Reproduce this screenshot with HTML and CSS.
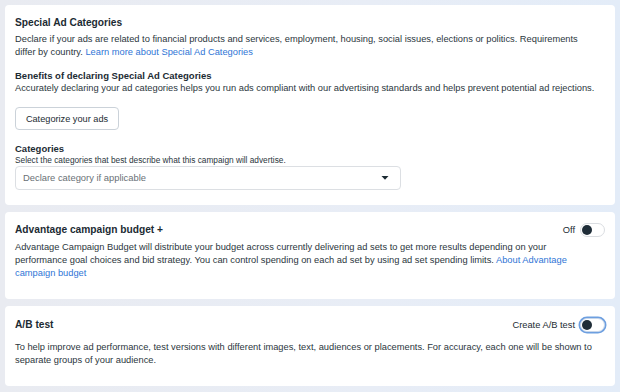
FILE: index.html
```html
<!DOCTYPE html>
<html>
<head>
<meta charset="utf-8">
<link rel="stylesheet" href="styles.css">
</head>
<body>
<main class="page">
  <section class="card card-sac">
    <h2 class="title">Special Ad Categories</h2>
    <p class="text intro">Declare if your ads are related to financial products and services, employment, housing, social issues, elections or politics. Requirements<br>differ by country. <a class="link" href="#">Learn more about Special Ad Categories</a></p>
    <h3 class="subtitle">Benefits of declaring Special Ad Categories</h3>
    <p class="text">Accurately declaring your ad categories helps you run ads compliant with our advertising standards and helps prevent potential ad rejections.</p>
    <button class="btn">Categorize your ads</button>
    <h3 class="subtitle cat-title">Categories</h3>
    <p class="hint">Select the categories that best describe what this campaign will advertise.</p>
    <div class="select">
      <span class="placeholder">Declare category if applicable</span>
      <svg class="caret" width="10" height="6" viewBox="0 0 10 6"><path d="M1.5 1h7L5 4.8z" fill="#1c2b33"/></svg>
    </div>
  </section>

  <section class="card card-acb">
    <div class="head">
      <h2 class="title">Advantage campaign budget <span class="plus">+</span></h2>
      <div class="switch-wrap"><span class="switch-label">Off</span><span class="switch"><span class="knob"></span></span></div>
    </div>
    <p class="text">Advantage Campaign Budget will distribute your budget across currently delivering ad sets to get more results depending on your<br>performance goal choices and bid strategy. You can control spending on each ad set by using ad set spending limits. <a class="link" href="#">About Advantage<br>campaign budget</a></p>
  </section>

  <section class="card card-ab">
    <div class="head">
      <h2 class="title">A/B test</h2>
      <div class="switch-wrap"><span class="switch-label">Create A/B test</span><span class="switch focused"><span class="knob"></span></span></div>
    </div>
    <p class="text">To help improve ad performance, test versions with different images, text, audiences or placements. For accuracy, each one will be shown to<br>separate groups of your audience.</p>
  </section>
</main>
</body>
</html>
```

FILE: styles.css
```css
* { box-sizing: border-box; }
html, body { margin: 0; padding: 0; }
body {
  width: 620px;
  height: 392px;
  overflow: hidden;
  background: linear-gradient(90deg, #e9ebf1 0%, #e8edf6 60%, #e3ecf8 100%);
  font-family: "Liberation Sans", Arial, sans-serif;
  color: #1c2b33;
}
.page {
  padding: 5px 5px 0 5px;
  display: flex;
  flex-direction: column;
  gap: 7px;
}
.card {
  background: #fff;
  border-radius: 4px;
  padding: 0 8px 0 10px;
}
.card-sac { height: 200px; padding-top: 10px; }
.card-acb { height: 87px; padding-top: 10px; }
.card-ab { height: 80px; padding-top: 11px; }

.title {
  margin: 0;
  font-size: 10.2px;
  line-height: 16px;
  font-weight: bold;
  color: #1c2b33;
}
.plus { font-weight: bold; }
.subtitle {
  margin: 0;
  font-size: 9.5px;
  line-height: 13px;
  font-weight: bold;
  color: #1c2b33;
}
.text {
  margin: 0;
  font-size: 9.3px;
  line-height: 13px;
  color: #2b363d;
}
.intro { margin-top: 1.5px; margin-bottom: 10px; }
.link { color: #2f75d6; text-decoration: none; }

.btn {
  display: block;
  margin-top: 12.5px;
  width: 104px;
  height: 23px;
  border: 1px solid #cbd2d9;
  border-radius: 4px;
  background: #fff;
  font-family: "Liberation Sans", Arial, sans-serif;
  font-size: 9.2px;
  color: #1c2b33;
  padding: 0;
}
.cat-title { margin-top: 11.5px; }
.hint {
  margin: 0;
  font-size: 8.3px;
  line-height: 11px;
  color: #2b363d;
}
.select {
  margin-top: 0.5px;
  width: 386px;
  height: 23.5px;
  border: 1px solid #dcdfe3;
  border-radius: 4px;
  display: flex;
  align-items: center;
  justify-content: space-between;
  padding: 0 10px 0 7px;
}
.placeholder { font-size: 9.4px; color: #6a7176; }

.head {
  display: flex;
  justify-content: space-between;
  align-items: center;
  height: 16px;
  margin-right: 2px;
}
.card-acb .head { margin-bottom: 2.5px; }
.card-ab .head { margin-bottom: 7.5px; }
.switch-wrap {
  display: flex;
  align-items: center;
  gap: 5px;
}
.switch-label { font-size: 9.3px; color: #1c2b33; }
.switch {
  width: 25px;
  height: 14px;
  border: 1px solid #dadde1;
  border-radius: 8px;
  background: #fff;
  display: flex;
  align-items: center;
  padding-left: 1px;
}
.switch.focused { box-shadow: 0 0 0 1.5px #6d9fe0; border-color: #c7d6ea; }
.knob {
  width: 10px;
  height: 10px;
  border-radius: 50%;
  background: #1f2d38;
}
```
